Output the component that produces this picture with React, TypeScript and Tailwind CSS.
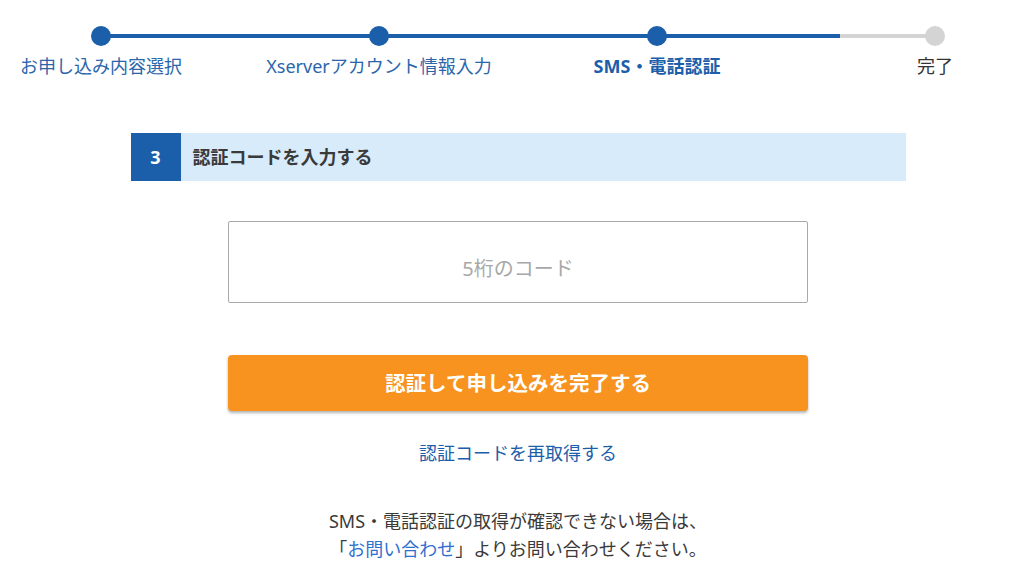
const FONT = "font-['Noto_Sans','Noto_Sans_CJK_JP',sans-serif]"

const steps = [
  { label: 'お申し込み内容選択', state: 'done' },
  { label: 'Xserverアカウント情報入力', state: 'done' },
  { label: 'SMS・電話認証', state: 'current' },
  { label: '完了', state: 'todo' },
]

function Stepper() {
  return (
    <div className="relative grid w-[1112px] grid-cols-4">
      {/* track behind the dots */}
      <div className="absolute left-[139px] top-[34px] flex h-[4px] w-[834px]">
        <div className="h-full w-[739px] bg-[#1b5ea9]" />
        <div className="h-full flex-1 bg-[#d4d4d4]" />
      </div>
      {steps.map((s) => (
        <div key={s.label} className="relative flex flex-col items-center">
          <div
            className={
              s.state === 'todo'
                ? 'mt-[26px] h-[20px] w-[20px] rounded-full bg-[#d4d4d4]'
                : 'mt-[26px] h-[20px] w-[20px] rounded-full bg-[#1b5ea9]'
            }
          />
          <div
            className={
              s.state === 'current'
                ? 'mt-[7px] text-[18px] leading-[27px] font-bold text-[#1b5ea9]'
                : s.state === 'done'
                  ? 'mt-[7px] text-[18px] leading-[27px] text-[#2b66ab]'
                  : 'mt-[7px] text-[18px] leading-[27px] text-[#333]'
            }
          >
            {s.label}
          </div>
        </div>
      ))}
    </div>
  )
}

export default function App() {
  return (
    <div className={`h-[578px] w-[1024px] overflow-hidden bg-white ${FONT}`}>
      <div className="flex flex-col items-center pl-[12px]">
        <Stepper />

        <div className="mt-[53px] flex h-[48px] w-[775px] bg-[#d8ebfb]">
          <div className="flex w-[50px] items-center justify-center bg-[#1b5ea9] text-[18px] font-bold text-white">
            3
          </div>
          <div className="flex items-center pl-[12px] text-[18px] font-bold text-[#3a3a3a]">
            認証コードを入力する
          </div>
        </div>

        <input
          type="text"
          placeholder="5桁のコード"
          className="mt-[40px] h-[82px] w-[580px] rounded-[2px] border border-[#a9a9a9] bg-white pt-[12px] text-center text-[20px] text-[#333] outline-none placeholder:text-[#a8a8a8]"
        />

        <button className="mt-[52px] h-[56px] w-[580px] rounded-[4px] bg-[#f7931e] text-[20.5px] font-bold text-white shadow-[0_2px_3px_rgba(0,0,0,0.3)]">
          認証して申し込みを完了する
        </button>

        <a className="mt-[28px] text-[18px] leading-[28px] text-[#1b5ea9]">認証コードを再取得する</a>

        <div className="mt-[40px] text-center text-[18px] leading-[28px] text-[#3a3a3a]">
          <p>SMS・電話認証の取得が確認できない場合は、</p>
          <p>
            「<a className="text-[#2f6fd0]">お問い合わせ</a>」よりお問い合わせください。
          </p>
        </div>
      </div>
    </div>
  )
}
